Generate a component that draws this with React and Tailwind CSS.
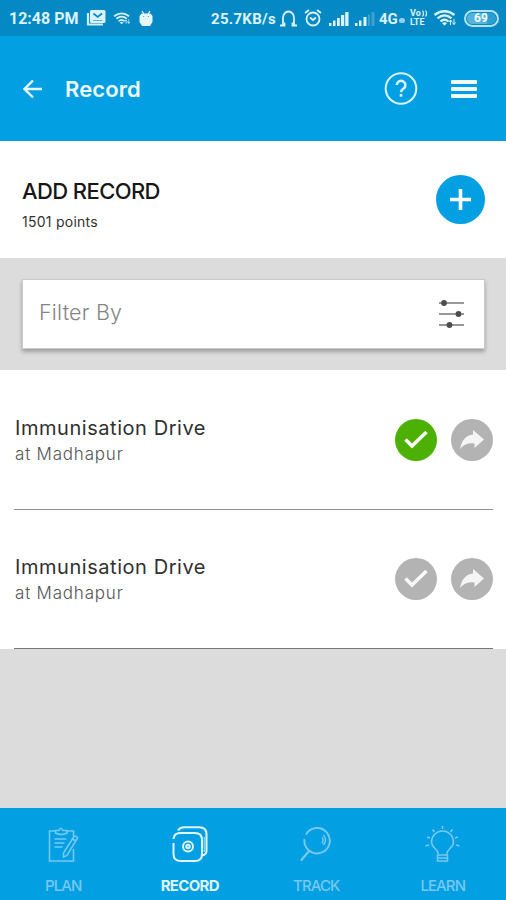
import React from "react";

function MailIcon() {
  return (
    <svg className="ml-[7px] h-[18px] w-5 shrink-0" viewBox="0 0 20 18" fill="none">
      <path d="M2 4v11.500h15" stroke="#cfeefb" strokeWidth="2.2" />
      <rect x="4" y="1" width="15.500" height="13" rx="1.500" fill="#d9f2fc" />
      <path d="M7.500 4.500l4.200 3.500L16 4.500" stroke="#0589c5" strokeWidth="1.700" />
      <path d="M7 11.500h9.500" stroke="#5ab4dc" strokeWidth="1" />
    </svg>
  );
}

function WifiIcon({ className }) {
  return (
    <svg className={className} viewBox="0 0 24 18" fill="none" stroke="#d9f2fc" strokeWidth="2.3">
      <path d="M1.500 6Q11.500-1.500 21.500 6" />
      <path d="M4.500 9.300Q11.500 3.500 18.500 9.300" />
      <path d="M7.500 12.500Q11.500 9 15.500 12.500" />
      <path d="M9 14l2.500 2.800L14 14q-2.500-1.500-5 0z" fill="#d9f2fc" stroke="none" />
      <path d="M17.500 16v-5M16 13l1.500-2 1.500 2M21 10v5.500M19.500 13.500l1.500 2 1.500-2" strokeWidth="1" />
    </svg>
  );
}

function StatusBar() {
  return (
    <div className="flex h-9 shrink-0 items-center bg-[#0589c5] pr-[7px] pl-[9px] font-['Roboto',sans-serif] font-bold text-[#dcf3fc]">
      <span className="mt-[2px] w-[70px] text-[16px] leading-none whitespace-nowrap">12:48 PM</span>
      <MailIcon />
      <WifiIcon className="ml-[7px] h-[15px] w-[18px] shrink-0" />
      <svg className="ml-[8px] h-[17px] w-[14px] shrink-0" viewBox="0 0 14 17" fill="#e5f6fd">
        <path d="M2.500 3.500h9L13.500 6v6l-2.500 4H3L.500 12V6z" />
        <path d="M3 1l2 3M11 1L9 4" stroke="#e5f6fd" strokeWidth="1.200" />
        <path d="M4 6.500h1.200M8.800 6.500H10" stroke="#5ab4dc" strokeWidth="1" />
      </svg>
      <span className="mt-[2px] ml-auto w-[67px] text-[15px] leading-none tracking-[0.3px] whitespace-nowrap">25.7KB/s</span>
      <svg className="ml-[2px] h-[17px] w-[17px] shrink-0" viewBox="0 0 17 17" fill="none" stroke="#dcf3fc">
        <path d="M3 15V8a5.500 6.500 0 0 1 11 0v7" strokeWidth="1.800" />
        <path d="M0 15.500h4.500v-3M17 15.500h-4.500v-3" strokeWidth="1.800" />
      </svg>
      <svg className="ml-[7px] h-[18px] w-[18px] shrink-0" viewBox="0 0 18 18" fill="none" stroke="#dcf3fc" strokeWidth="1.800">
        <circle cx="9" cy="10" r="6.500" />
        <path d="M1 4l4-3M17 4l-4-3M6 8.500l3 2.500 3-2.500" />
      </svg>
      <svg className="ml-[7px] h-[15px] w-[20px] shrink-0" viewBox="0 0 20 15" fill="#dcf3fc">
        <path d="M0 12h2.500v3H0zM4 9.500h2.500V15H4zM8 7h2.800v8H8zM12 4h3.200v11H12zM16.200 1h3.300v14h-3.300z" />
      </svg>
      <svg className="ml-[6px] h-[15px] w-[20px] shrink-0" viewBox="0 0 20 15" fill="#dcf3fc">
        <path d="M0 12h2.500v3H0zM4 9.500h2.500V15H4zM8.500 6h3v9h-3z" />
        <path d="M13 3.500h2V15h-2zM16.500 1h3v14h-3z" opacity=".25" />
      </svg>
      <span className="mt-[2px] ml-[4px] w-5 text-[15px] leading-none">4G</span>
      <span className="mt-1 h-[5px] w-[6px] rounded-sm bg-[#8fd0ed]" />
      <span className="ml-[5px] flex w-[18px] flex-col text-[9px] leading-[9px]">
        <span className="flex items-center">
          Vo
          <svg className="ml-px h-[7px] w-[6px]" viewBox="0 0 6 7" fill="none" stroke="currentColor" strokeWidth="1.200">
            <path d="M.500.500q2 3 0 6M3.500.500q2 3 0 6" />
          </svg>
        </span>
        <span>LTE</span>
      </span>
      <WifiIcon className="ml-[5px] h-[18px] w-6 shrink-0" />
      <span className="ml-[7px] flex h-[17px] w-[35px] items-center justify-center rounded-full border-2 border-[#b5e2f5] p-px">
        <span className="flex h-full w-full items-center justify-center rounded-full bg-[linear-gradient(90deg,#54b4df_68%,#2c9fd3_68%)] pr-px text-[12px] leading-none text-[#f2fbff]">
          69
        </span>
      </span>
    </div>
  );
}

function Header() {
  return (
    <header className="flex h-[105px] shrink-0 items-center bg-[#039fe3] pr-[29px] pl-[23px] text-[#eef9ff]">
      <svg className="h-5 w-5" viewBox="0 0 20 20" fill="none" stroke="#e6f7ff" strokeWidth="2.400">
        <path d="M19 10H2M10 1.500L1.500 10l8.500 8.500" />
      </svg>
      <h1 className="ml-[22px] text-[22px] leading-none font-semibold tracking-[0.1px]">Record</h1>
      <svg className="ml-auto h-[34px] w-[34px]" viewBox="0 0 34 34" fill="none" stroke="#d9f3ff">
        <circle cx="17" cy="16.500" r="15.300" strokeWidth="2" />
        <path d="M12.800 13a4.300 4.300 0 1 1 6.800 3.600q-2.600 1.800-2.600 3.700" strokeWidth="2.500" />
        <path d="M17 22v2.700" strokeWidth="2.600" />
      </svg>
      <div className="ml-[33px] flex w-[26px] flex-col gap-[3px]">
        <span className="h-1 rounded-[1px] bg-[#f0faff]" />
        <span className="h-1 rounded-[1px] bg-[#f0faff]" />
        <span className="h-1 rounded-[1px] bg-[#f0faff]" />
      </div>
    </header>
  );
}

function AddRecord() {
  return (
    <section className="flex h-[117px] shrink-0 items-center justify-between bg-white pr-[21px] pl-[22px]">
      <div className="pt-[9px]">
        <h2 className="text-[22px] leading-[28px] font-medium tracking-[-0.6px] text-[#171717]">ADD RECORD</h2>
        <p className="mt-[7px] text-[14px] leading-5 tracking-[0.25px] text-[#333]">1501 points</p>
      </div>
      <button className="flex h-[49px] w-[49px] items-center justify-center rounded-full bg-[#039fe3]" aria-label="Add record">
        <svg className="h-[21px] w-[21px]" viewBox="0 0 21 21" stroke="white" strokeWidth="3.600">
          <path d="M10.500 0v21M0 10.500h21" />
        </svg>
      </button>
    </section>
  );
}

function FilterBar() {
  return (
    <section className="h-[112px] shrink-0 bg-[#dcdcdc] pt-[21px] pr-[21px] pl-[22px]">
      <div className="flex h-[70px] items-center justify-between border border-[#c9c9c9] bg-white pr-[19px] pl-[16px] shadow-[0_3px_4px_rgba(0,0,0,0.28)]">
        <span className="-mt-[2px] text-[21.500px] leading-none font-light tracking-[0.2px] text-[#858585]">Filter By</span>
        <svg className="h-7 w-[27px]" viewBox="0 0 27 28" fill="#4c4c4c" stroke="#777" strokeWidth="1.500">
          <path d="M1 3h25M1 14h25M1 25h25" />
          <g stroke="none">
            <circle cx="6" cy="3" r="2.900" />
            <circle cx="20.500" cy="14" r="2.900" />
            <circle cx="11.500" cy="25" r="2.900" />
          </g>
        </svg>
      </div>
    </section>
  );
}

function RecordRow({ done }) {
  return (
    <li
      className={`mr-[13px] ml-[14px] flex items-start justify-between border-b ${done ? "h-[140px] border-[#919191] pt-[48px]" : "h-[139px] border-[#777] pt-[47px]"}`}
    >
      <div className="pl-px">
        <h3 className="text-[20px] leading-5 tracking-[0.55px] text-[#303030]">Immunisation Drive</h3>
        <p className="mt-[6px] text-[17px] leading-5 font-light tracking-[0.8px] text-[#555]">at Madhapur</p>
      </div>
      <div className="mt-px flex gap-[14px]">
        <span className={`h-[42px] w-[42px] rounded-full ${done ? "bg-[#4db004]" : "bg-[#b3b3b3]"}`}>
          <svg className="h-[42px] w-[42px]" viewBox="0 0 42 42" fill="none" stroke="#fafafa" strokeWidth="3.500">
            <path d="M10.500 20.500l6.500 6.500L31.500 13" />
          </svg>
        </span>
        <span className="h-[42px] w-[42px] rounded-full bg-[#b3b3b3]">
          <svg className="h-[42px] w-[42px]" viewBox="0 0 42 42" fill="#f5f5f5">
            <path d="M9 30Q11.500 16.500 22 15.500V11l11 9.500-9.500 8.500v-4.500Q14 23.500 9 30z" />
          </svg>
        </span>
      </div>
    </li>
  );
}

function PlanIcon() {
  return (
    <>
      <path d="M9 5H2.500v30h24V23M19 5h7.500v5" />
      <path d="M8.500 7V4.500H12Q14 0 16 4.500h4V7q-5.500 3-11.500 0z" />
      <path d="M7.500 13h12M7.500 17h10M7.500 21h8" />
      <path d="M27 10.500q3-1 3.500 1.500L20 29.500l-3.500 1.500v-4zM25.500 13l3.500 2" />
    </>
  );
}

function RecordIcon() {
  return (
    <g strokeWidth="2">
      <path d="M1.500 13V12.500Q2.500 7 8 7h15q7 0 7 7v14q0 7-7 7H9q-7.500 0-7.500-7V17" />
      <path d="M6 4.500Q8 1.300 12 1.300h15q7.500 0 7.500 7V25q0 3.500-4.500 4.500" />
      <path d="M32.300 11v15" strokeWidth="1.300" opacity=".6" />
      <circle cx="16" cy="20.500" r="5" />
      <circle cx="16" cy="20.500" r="1.700" />
    </g>
  );
}

function TrackIcon() {
  return (
    <>
      <path d="M6 8.500A12.700 12.700 0 1 1 4.500 13" strokeWidth="1.900" />
      <path d="M9 25l-8 9.500" strokeWidth="2.200" />
      <path d="M23.500 9q4 5 0 10M22 11.500q2 2.500 0 6" />
    </>
  );
}

function LearnIcon() {
  return (
    <>
      <path d="M13 29v-2Q12.500 25 10 22.500Q6.500 19 6.500 16a11 11 0 0 1 22 0q0 3-3.500 6.500-2.500 2.500-3 4.500v2z" />
      <path d="M12.500 29v6h10v-6M13 32h9" />
      <path d="M17.500 0v3M7.500 3.500l2 2.500M27.500 3.500L25.500 6M2 11l3 1M33 11l-3 1M.500 20l3.500-1M34.500 20L31 19" />
    </>
  );
}

function NavItem({ label, icon, active, wide }) {
  return (
    <a className={`flex flex-1 flex-col items-center pt-[18px] ${active ? "text-[#dff5ff]" : "text-[#77c9f0]"}`}>
      <svg
        className={`h-9 ${wide ? "w-9" : "w-8"}`}
        viewBox={wide ? "0 0 36 36" : "0 0 32 36"}
        fill="none"
        stroke="currentColor"
        strokeWidth="1.500"
      >
        {icon}
      </svg>
      <span className={`mt-[15px] text-[15px] leading-[18px] ${active ? "font-bold tracking-[-0.7px]" : "font-medium tracking-[-0.9px]"}`}>
        {label}
      </span>
    </a>
  );
}

export default function App() {
  return (
    <main className="flex h-[900px] w-[506px] flex-col overflow-hidden bg-[#dcdcdc] font-['Inter','Liberation_Sans',sans-serif]">
      <StatusBar />
      <Header />
      <AddRecord />
      <FilterBar />
      <ul className="shrink-0 bg-white">
        <RecordRow done />
        <RecordRow />
      </ul>
      <nav className="mt-auto flex h-[92px] shrink-0 bg-[#039fe3]">
        <NavItem label="PLAN" icon={<PlanIcon />} />
        <NavItem label="RECORD" icon={<RecordIcon />} wide active />
        <NavItem label="TRACK" icon={<TrackIcon />} />
        <NavItem label="LEARN" icon={<LearnIcon />} wide />
      </nav>
    </main>
  );
}
